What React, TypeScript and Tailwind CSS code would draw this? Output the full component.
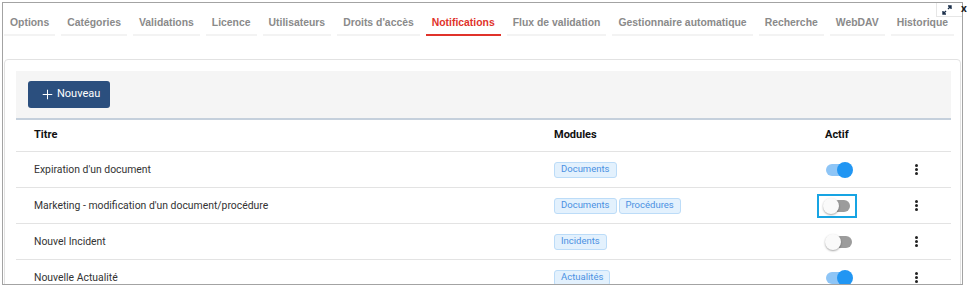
import React from 'react';
import { Plus } from 'lucide-react';

const tabs = [
  'Options',
  'Catégories',
  'Validations',
  'Licence',
  'Utilisateurs',
  "Droits d'accès",
  'Notifications',
  'Flux de validation',
  'Gestionnaire automatique',
  'Recherche',
  'WebDAV',
  'Historique',
];

const rows = [
  { title: "Expiration d'un document", modules: ['Documents'], active: true },
  { title: "Marketing - modification d'un document/procédure", modules: ['Documents', 'Procédures'], active: false, focused: true },
  { title: 'Nouvel Incident', modules: ['Incidents'], active: false },
  { title: 'Nouvelle Actualité', modules: ['Actualités'], active: true },
];

function Toggle({ on }: { on: boolean }) {
  return (
    <div className="relative w-[28px] h-[16px] flex items-center">
      <div className={`ml-[1px] w-[26px] h-[12px] rounded-full ${on ? 'bg-[#8ec5f6]' : 'bg-[#9c9c9c]'}`} />
      <div
        className={`absolute top-0 w-[16px] h-[16px] rounded-full ${
          on ? 'left-[12px] bg-[#2196f3]' : 'left-0 bg-[#fafafa] shadow-[0_1px_2px_rgba(0,0,0,0.35)]'
        }`}
      />
    </div>
  );
}

function Kebab() {
  return (
    <div className="w-[3px] flex flex-col gap-[1px]">
      <div className="w-[3px] h-[3px] rounded-full bg-[#222]" />
      <div className="w-[3px] h-[3px] rounded-full bg-[#222]" />
      <div className="w-[3px] h-[3px] rounded-full bg-[#222]" />
    </div>
  );
}

export default function App() {
  return (
    <div className="w-[972px] h-[289px] bg-white overflow-hidden relative">
      <div className="ml-[2px] mt-[2px] w-[961px] h-[283px] border border-[#a3a3a3] overflow-hidden relative bg-white">
        {/* tabs */}
        <div className="flex font-['Liberation_Sans',Arial,sans-serif] font-bold text-[10.4px] leading-[14px]">
          {tabs.map((t, i) => {
            const active = t === 'Notifications';
            return (
              <div
                key={t}
                className={`${i === 0 ? 'ml-[1px]' : 'ml-[3px]'} mr-[3px] px-[6px] pt-[13px] pb-[4px] border-b-2 whitespace-nowrap ${
                  active ? 'border-[#e0332b] text-[#e0332b]' : 'border-[#f3f3f3] text-[#8a8a8a]'
                }`}
              >
                {t}
              </div>
            );
          })}
        </div>

        {/* card */}
        <div className="mt-[23px] mx-[1px] border border-[#e2e2e2] rounded-[4px] p-[11px] pr-[9px] font-['Roboto',Arial,sans-serif] text-[10.4px]">
          <div className="bg-[#f5f5f5] h-[49px] border-b-2 border-[#c5d0dc] pl-[12px] pt-[10px]">
            <button className="inline-flex items-center h-[27px] w-[82px] pl-[12px] rounded-[3px] bg-[#2b4f7e] text-white text-[11px]">
              <Plus size={15} strokeWidth={1.6} className="mr-[2px]" />
              Nouveau
            </button>
          </div>

          <div className="grid grid-cols-[538px_271px_70px_1fr] h-[32px] items-center border-b border-[#e3e3e3] font-bold text-[11px] text-[#111]">
            <div className="pl-[18px]">Titre</div>
            <div>Modules</div>
            <div>Actif</div>
            <div />
          </div>

          {rows.map((r) => (
            <div
              key={r.title}
              className="grid grid-cols-[538px_271px_70px_1fr] h-[36px] items-center border-b border-[#e3e3e3] text-[#333]"
            >
              <div className="pl-[18px]">{r.title}</div>
              <div className="flex gap-[2px]">
                {r.modules.map((m) => (
                  <span
                    key={m}
                    className="h-[16px] px-[6px] flex items-center rounded-[3px] border border-[#bcdcf8] bg-[#e3f1fd] text-[#4a90e2] text-[9.5px]"
                  >
                    {m}
                  </span>
                ))}
              </div>
              <div className="flex">
                {r.focused ? (
                  <div className="-ml-[8px] px-[4px] py-[2px] border-2 border-[#17a4e3]">
                    <Toggle on={r.active} />
                  </div>
                ) : (
                  <Toggle on={r.active} />
                )}
              </div>
              <div className="pl-[20px]">
                <Kebab />
              </div>
            </div>
          ))}
        </div>

        {/* window controls */}
        <div className="absolute top-0 right-0 w-[26px] h-[14px] bg-white border-l border-b border-[#e6e6e6] flex items-center pl-[5px]">
          <svg width="10" height="10" viewBox="0 0 10 10" fill="none" stroke="#1b2f4a" strokeWidth="1.4">
            <path d="M6 1h3v3M9 1L6 4M4 9H1V6M1 9l3-3" />
          </svg>
        </div>
      </div>
      <div className="absolute top-[3px] left-[961px] text-[10px] leading-[10px] font-bold text-[#222]">x</div>
    </div>
  );
}
